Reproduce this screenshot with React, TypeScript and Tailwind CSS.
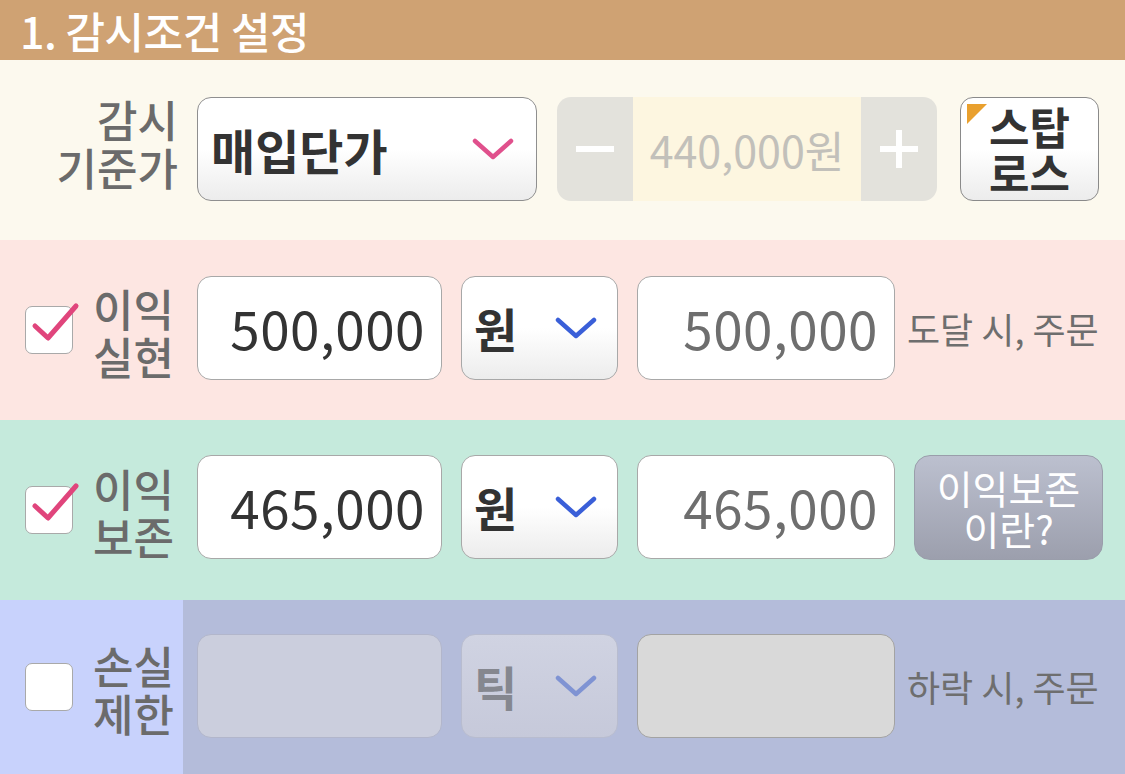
import React from 'react';

const FONT = { fontFamily: '"Noto Sans CJK KR", "Noto Sans", sans-serif' };

function Chevron({ color }: { color: string }) {
  return (
    <svg width="42" height="24" viewBox="0 0 42 24" className="shrink-0">
      <polyline points="3,4 21,20 39,4" fill="none" stroke={color} strokeWidth="4.5" strokeLinecap="round" strokeLinejoin="round" />
    </svg>
  );
}

function Check({ checked }: { checked: boolean }) {
  return (
    <div className="relative h-[48px] w-[48px] shrink-0 rounded-[7px] border-[1.5px] border-[#a9a9a9] bg-white">
      {checked && (
        <svg width="56" height="50" viewBox="0 0 56 50" className="absolute -top-[11px] left-[4px]">
          <polyline points="5,30 18,42 46,10" fill="none" stroke="#e0457c" strokeWidth="5" strokeLinecap="round" strokeLinejoin="round" />
        </svg>
      )}
    </div>
  );
}

function Label({ lines, className = '' }: { lines: string[]; className?: string }) {
  return (
    <div className={`flex flex-col text-[44px] leading-[48px] font-medium text-[#6b6b6b] ${className}`}>
      {lines.map((l) => (
        <span key={l}>{l}</span>
      ))}
    </div>
  );
}

function Field({ value, tone, disabled }: { value?: string; tone: 'dark' | 'gray'; disabled?: 'blue' | 'gray' }) {
  const bg =
    disabled === 'blue'
      ? 'bg-[#cbcedd] border-[#b2b6cb]'
      : disabled === 'gray'
      ? 'bg-[#d9d9d9] border-[#a3a3a3]'
      : 'bg-white border-[#a8a8a8]';
  return (
    <div className={`flex h-[104px] items-center justify-end rounded-[14px] border-[1.5px] pr-[16px] ${bg}`}>
      {value && (
        <span className={`text-[53px] tracking-[0.5px] ${tone === 'dark' ? 'text-[#333333]' : 'text-[#6e6e6e]'}`}>{value}</span>
      )}
    </div>
  );
}

function Unit({ text, disabled }: { text: string; disabled?: boolean }) {
  return (
    <div
      className={`flex h-[104px] w-[157px] shrink-0 items-center justify-between rounded-[14px] border-[1.5px] pl-[12px] pr-[20px] ${
        disabled
          ? 'border-[#b8bccf] bg-gradient-to-b from-[#d0d3e2] to-[#c6c9da]'
          : 'border-[#a8a8a8] bg-gradient-to-b from-white via-white to-[#ececec]'
      }`}
    >
      <span className={`text-[47px] font-bold ${disabled ? 'text-[#85878f]' : 'text-[#333333]'}`}>{text}</span>
      <Chevron color={disabled ? '#7f93d3' : '#3a5fd8'} />
    </div>
  );
}

export default function App() {
  return (
    <div className="h-[774px] w-[1125px] overflow-hidden" style={FONT}>
      <header className="flex h-[60px] items-center bg-[#cfa273] pl-[20px]">
        <h1 className="text-[43px] font-medium tracking-[-0.5px] text-white">1. 감시조건 설정</h1>
      </header>

      {/* 감시 기준가 */}
      <section className="flex h-[180px] items-start bg-[#fcf9ee] pt-[37px]">
        <div className="flex w-[183px] shrink-0 justify-end pr-[5px]">
          <Label lines={['감시', '기준가']} className="items-end text-[41px] leading-[46px] -mt-[2px]" />
        </div>
        <div className="ml-[14px] flex h-[104px] w-[340px] items-center justify-between rounded-[14px] border-[1.5px] border-[#8f8f8f] bg-gradient-to-b from-white via-white to-[#ececec] pl-[13px] pr-[22px]">
          <span className="text-[48px] font-bold text-[#333333]">매입단가</span>
          <Chevron color="#e0508c" />
        </div>
        <div className="ml-[20px] flex h-[104px] w-[380px] overflow-hidden rounded-[14px] bg-[#e3e2dc]">
          <div className="flex w-[76px] items-center justify-center">
            <div className="h-[6px] w-[38px] bg-white" />
          </div>
          <div className="flex flex-1 items-center justify-center bg-[#fdf6e0]">
            <span className="text-[43px] text-[#c2c0ba]">440,000원</span>
          </div>
          <div className="relative flex w-[76px] items-center justify-center">
            <div className="h-[6px] w-[38px] bg-white" />
            <div className="absolute h-[38px] w-[6px] bg-white" />
          </div>
        </div>
        <div className="relative ml-[23px] flex h-[104px] w-[139px] flex-col items-center justify-center rounded-[13px] border-[1.5px] border-[#8a8a8a] bg-gradient-to-b from-white via-white to-[#ececec] text-[44px] font-bold leading-[46px] text-[#333333]">
          <svg width="20" height="20" viewBox="0 0 20 20" className="absolute left-[6px] top-[6px]">
            <polygon points="0,0 20,0 0,20" fill="#e9a02e" />
          </svg>
          <span>스탑</span>
          <span>로스</span>
        </div>
      </section>

      {/* 이익 실현 */}
      <section className="flex h-[180px] items-start bg-[#fde6e2] pt-[36px]">
        <div className="flex w-[183px] shrink-0 items-center self-stretch pb-[36px] pl-[25px]">
          <Check checked />
          <Label lines={['이익', '실현']} className="ml-[20px] mt-[4px]" />
        </div>
        <div className="ml-[14px] w-[245px] shrink-0">
          <Field value="500,000" tone="dark" />
        </div>
        <div className="ml-[19px]">
          <Unit text="원" />
        </div>
        <div className="ml-[19px] w-[258px] shrink-0">
          <Field value="500,000" tone="gray" />
        </div>
        <div className="ml-[12px] flex h-[104px] items-center">
          <span className="text-[36px] text-[#6e6e6e]">도달 시, 주문</span>
        </div>
      </section>

      {/* 이익 보존 */}
      <section className="flex h-[180px] items-start bg-[#c5eadc] pt-[35px]">
        <div className="flex w-[183px] shrink-0 items-center self-stretch pb-[35px] pl-[25px]">
          <Check checked />
          <Label lines={['이익', '보존']} className="ml-[20px] mt-[4px]" />
        </div>
        <div className="ml-[14px] w-[245px] shrink-0">
          <Field value="465,000" tone="dark" />
        </div>
        <div className="ml-[19px]">
          <Unit text="원" />
        </div>
        <div className="ml-[19px] w-[258px] shrink-0">
          <Field value="465,000" tone="gray" />
        </div>
        <div className="ml-[19px] flex h-[105px] w-[189px] flex-col items-center justify-center rounded-[16px] border-[1.5px] border-[#9a9eab] bg-gradient-to-b from-[#bcc0cf] to-[#9c9fad] text-[39px] leading-[41px] text-white">
          <span>이익보존</span>
          <span>이란?</span>
        </div>
      </section>

      {/* 손실 제한 */}
      <section className="flex h-[180px] items-start bg-[#b4bcda]">
        <div className="flex w-[183px] shrink-0 items-center self-stretch bg-[#c8d2fc] pb-[6px] pl-[25px]">
          <Check checked={false} />
          <Label lines={['손실', '제한']} className="ml-[20px] mt-[4px]" />
        </div>
        <div className="ml-[14px] mt-[34px] w-[245px] shrink-0">
          <Field tone="dark" disabled="blue" />
        </div>
        <div className="ml-[19px] mt-[34px]">
          <Unit text="틱" disabled />
        </div>
        <div className="ml-[19px] mt-[34px] w-[258px] shrink-0">
          <Field tone="gray" disabled="gray" />
        </div>
        <div className="ml-[12px] mt-[34px] flex h-[104px] items-center">
          <span className="text-[36px] text-[#6e6e6e]">하락 시, 주문</span>
        </div>
      </section>
    </div>
  );
}
